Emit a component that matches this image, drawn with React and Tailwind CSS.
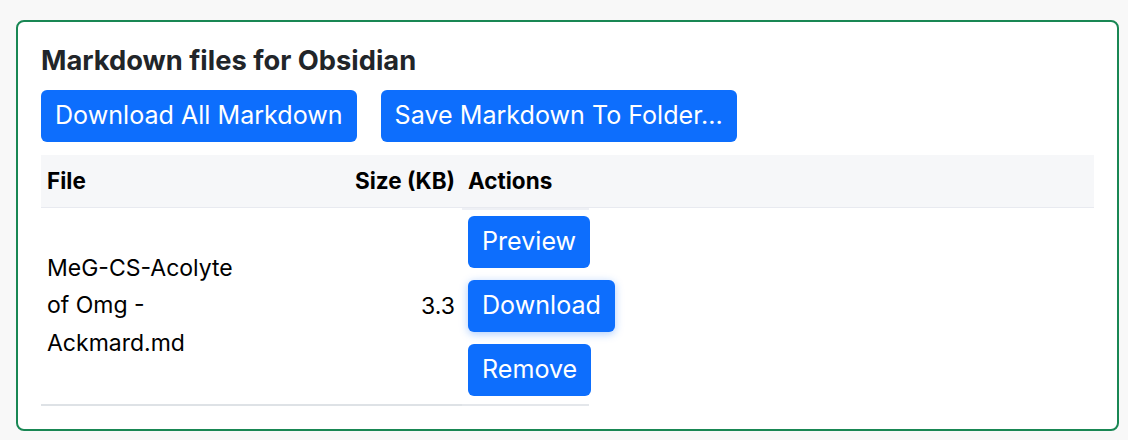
const files = [
  { name: 'MeG-CS-Acolyte of Omg - Ackmard.md', size: '3.3' },
];

const Btn = ({ children, className = '' }) => (
  <button
    className={`h-[52px] px-[14px] rounded-[6px] bg-[#0d6efd] text-white text-[25.1px] leading-none whitespace-nowrap ${className}`}
  >
    {children}
  </button>
);

export default function App() {
  return (
    <div
      className="min-h-[440px] bg-[#f8f8f8] pt-5 pl-4"
      style={{ fontFamily: 'Inter, "Liberation Sans", sans-serif' }}
    >
      <div className="w-[1103px] h-[411px] bg-white border-2 border-[#198754] rounded-[8px] px-[23px] pt-[23px]">
        {/* Heading */}
        <h2 className="text-[27.3px] font-bold leading-[32px] text-[#212529] mb-[13px]">
          Markdown files for Obsidian
        </h2>

        {/* Top buttons */}
        <div className="flex gap-6 mb-[13px]">
          <Btn>Download All Markdown</Btn>
          <Btn>Save Markdown To Folder...</Btn>
        </div>

        {/* Table header */}
        <div className="flex items-center h-[53px] pb-px bg-[#f6f7f9] border-b border-[#e8eaf0] text-[22.5px] font-bold text-black">
          <div className="w-[300px] pl-[6px]">File</div>
          <div className="w-[121px] text-right pr-[7px]">Size (KB)</div>
          <div className="flex-1 pl-[6px]">Actions</div>
        </div>

        {/* Rows */}
        {files.map((f) => (
          <div key={f.name} className="flex text-[23px] text-black">
            <div className="flex items-center w-[421px] h-[198px] border-b-2 border-[#dee2e6]">
              <div className="w-[300px] pl-[6px]">
                <div className="w-[200px] leading-[37.5px]">{f.name}</div>
              </div>
              <div className="w-[121px] text-right pr-[7px]">{f.size}</div>
            </div>
            <div className="w-[127px] h-[198px] border-t-2 border-b-2 border-t-[#eef0f5] border-b-[#e4e7eb] pl-[6px] pt-[6px] flex flex-col gap-3">
              <Btn className="w-fit">Preview</Btn>
              <Btn className="w-fit shadow-[0_2px_8px_rgba(13,110,253,0.35)]">Download</Btn>
              <Btn className="w-fit">Remove</Btn>
            </div>
          </div>
        ))}
      </div>
    </div>
  );
}
